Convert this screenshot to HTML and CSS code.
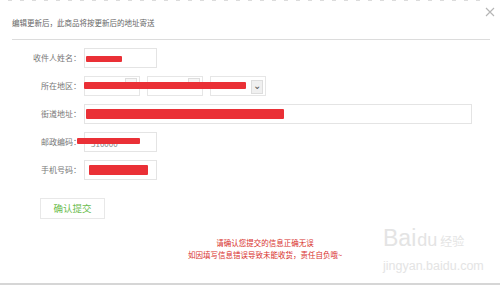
FILE: index.html
```html
<!DOCTYPE html>
<html lang="zh-CN">
<head>
  <meta charset="UTF-8" />
  <meta name="viewport" content="width=device-width, initial-scale=1.0"/>
  <title>编辑收货地址</title>
  <link rel="stylesheet" href="styles.css">
</head>
<body>
  <div class="dialog">
    <div class="top-strip"></div>
    <div class="header">
      <span class="title">编辑更新后，此商品将按更新后的地址寄送</span>
      <button class="close" title="关闭">
        <svg width="10" height="10" viewBox="0 0 10 10">
          <path d="M1 1 L9 9 M9 1 L1 9" stroke="#b5b5b5" stroke-width="1.1" fill="none"/>
        </svg>
      </button>
    </div>

    <div class="form">
      <div class="row">
        <label class="label">收件人姓名：</label>
        <div class="input short">
          <span class="mark" style="left:1px;top:7px;width:36px;height:6px"></span>
        </div>
      </div>

      <div class="row">
        <label class="label">所在地区：</label>
        <div class="selects">
          <div class="select"><span class="arrow"></span></div>
          <div class="select"><span class="arrow"></span></div>
          <div class="select last"><span class="arrow big">⌄</span></div>
          <span class="mark" style="left:0;top:6px;width:162px;height:7px"></span>
        </div>
      </div>

      <div class="row">
        <label class="label">街道地址：</label>
        <div class="input long">
          <span class="mark" style="left:1px;top:4px;width:198px;height:10px"></span>
        </div>
      </div>

      <div class="row">
        <label class="label">邮政编码：</label>
        <div class="input short">
          <span class="value">510000</span>
          <span class="mark" style="left:-8px;top:5px;width:63px;height:6px"></span>
        </div>
      </div>

      <div class="row">
        <label class="label">手机号码：</label>
        <div class="input short">
          <span class="mark" style="left:4px;top:4px;width:59px;height:10px"></span>
        </div>
      </div>

      <div class="actions">
        <button class="submit">确认提交</button>
      </div>
    </div>

    <div class="notice">
      <p>请确认您提交的信息正确无误</p>
      <p>如因填写信息错误导致未能收货，责任自负哦~</p>
    </div>

    <div class="watermark">
      <div class="brand">Bai<span class="paw">du</span><span class="jy">经验</span></div>
      <div class="site">jingyan.baidu.com</div>
    </div>
  </div>
</body>
</html>
```

FILE: styles.css
```css
body {
  margin: 0;
  background: #ffffff;
  font-family: "Noto Sans CJK SC", "Liberation Sans", sans-serif;
  color: #555;
}

.dialog {
  position: relative;
  height: 283px;
  border-bottom: 2px solid #d6d6d6;
  overflow: hidden;
}

.top-strip {
  height: 1px;
  margin: 0 0 0 8px;
  width: 480px;
  background: repeating-linear-gradient(90deg, #9a9a9a 0 4px, transparent 4px 12px);
  opacity: 0.35;
}

.header {
  display: flex;
  align-items: flex-start;
  height: 38px;
  margin: 0 10px 0 12px;
  border-bottom: 1px solid #dcdcdc;
}

.title {
  font-size: 7.5px;
  line-height: 10px;
  margin-top: 17px;
  color: #666;
}

.close {
  margin-left: auto;
  margin-top: 4px;
  margin-right: -5px;
  padding: 0;
  border: none;
  background: none;
  width: 10px;
  height: 10px;
  cursor: pointer;
}

.form {
  padding-top: 7px;
}

.row {
  display: flex;
  align-items: center;
  height: 21px;
  margin-bottom: 7px;
}

.label {
  width: 84px;
  padding-right: 3px;
  box-sizing: border-box;
  text-align: right;
  font-size: 8px;
  color: #777;
}

.input {
  position: relative;
  height: 20px;
  border: 1px solid #e4e4e4;
  box-sizing: border-box;
  background: #fff;
}

.input.short {
  width: 73px;
}

.input.long {
  width: 388px;
}

.value {
  position: absolute;
  left: 6px;
  top: 6px;
  font-size: 8px;
  line-height: 9px;
  color: #888;
}

.mark {
  position: absolute;
  background: #ea3036;
  border-radius: 1px;
}

.selects {
  position: relative;
  display: flex;
  gap: 7px;
  height: 20px;
}

.select {
  position: relative;
  width: 56px;
  height: 20px;
  border: 1px solid #e6e6e6;
  box-sizing: border-box;
}

.arrow {
  position: absolute;
  right: 2px;
  top: 1px;
  width: 10px;
  height: 9px;
  border: 1px solid #ddd;
  background: #f6f6f6;
}

.arrow.big {
  top: 3px;
  height: 12px;
  font-size: 10px;
  line-height: 7px;
  text-align: center;
  color: #555;
  background: #f0f0f0;
}

.actions {
  padding: 6px 0 0 40px;
}

.submit {
  width: 65px;
  height: 21px;
  padding: 0;
  border: 1px solid #e8e8e8;
  background: #fff;
  color: #6cbd4e;
  font-family: "Noto Sans CJK SC", sans-serif;
  font-size: 9.5px;
  cursor: pointer;
}

.notice {
  margin: 18px 0 0 165px;
  width: 200px;
  text-align: center;
  color: #d8302c;
  font-size: 7.5px;
  line-height: 12px;
}

.notice p {
  margin: 0;
}

.watermark {
  position: absolute;
  left: 383px;
  top: 224px;
  color: #e4e4e4;
}

.brand {
  display: flex;
  align-items: baseline;
  font-family: "Liberation Sans", "Noto Sans CJK SC", sans-serif;
  font-size: 23px;
  line-height: 28px;
}

.paw {
  font-size: 18px;
  margin-left: 1px;
}

.jy {
  font-family: "Noto Sans CJK SC", sans-serif;
  font-size: 12px;
  margin-left: 3px;
}

.site {
  font-family: "Liberation Sans", sans-serif;
  font-size: 12.5px;
  line-height: 14px;
  margin-top: 4px;
}
```
